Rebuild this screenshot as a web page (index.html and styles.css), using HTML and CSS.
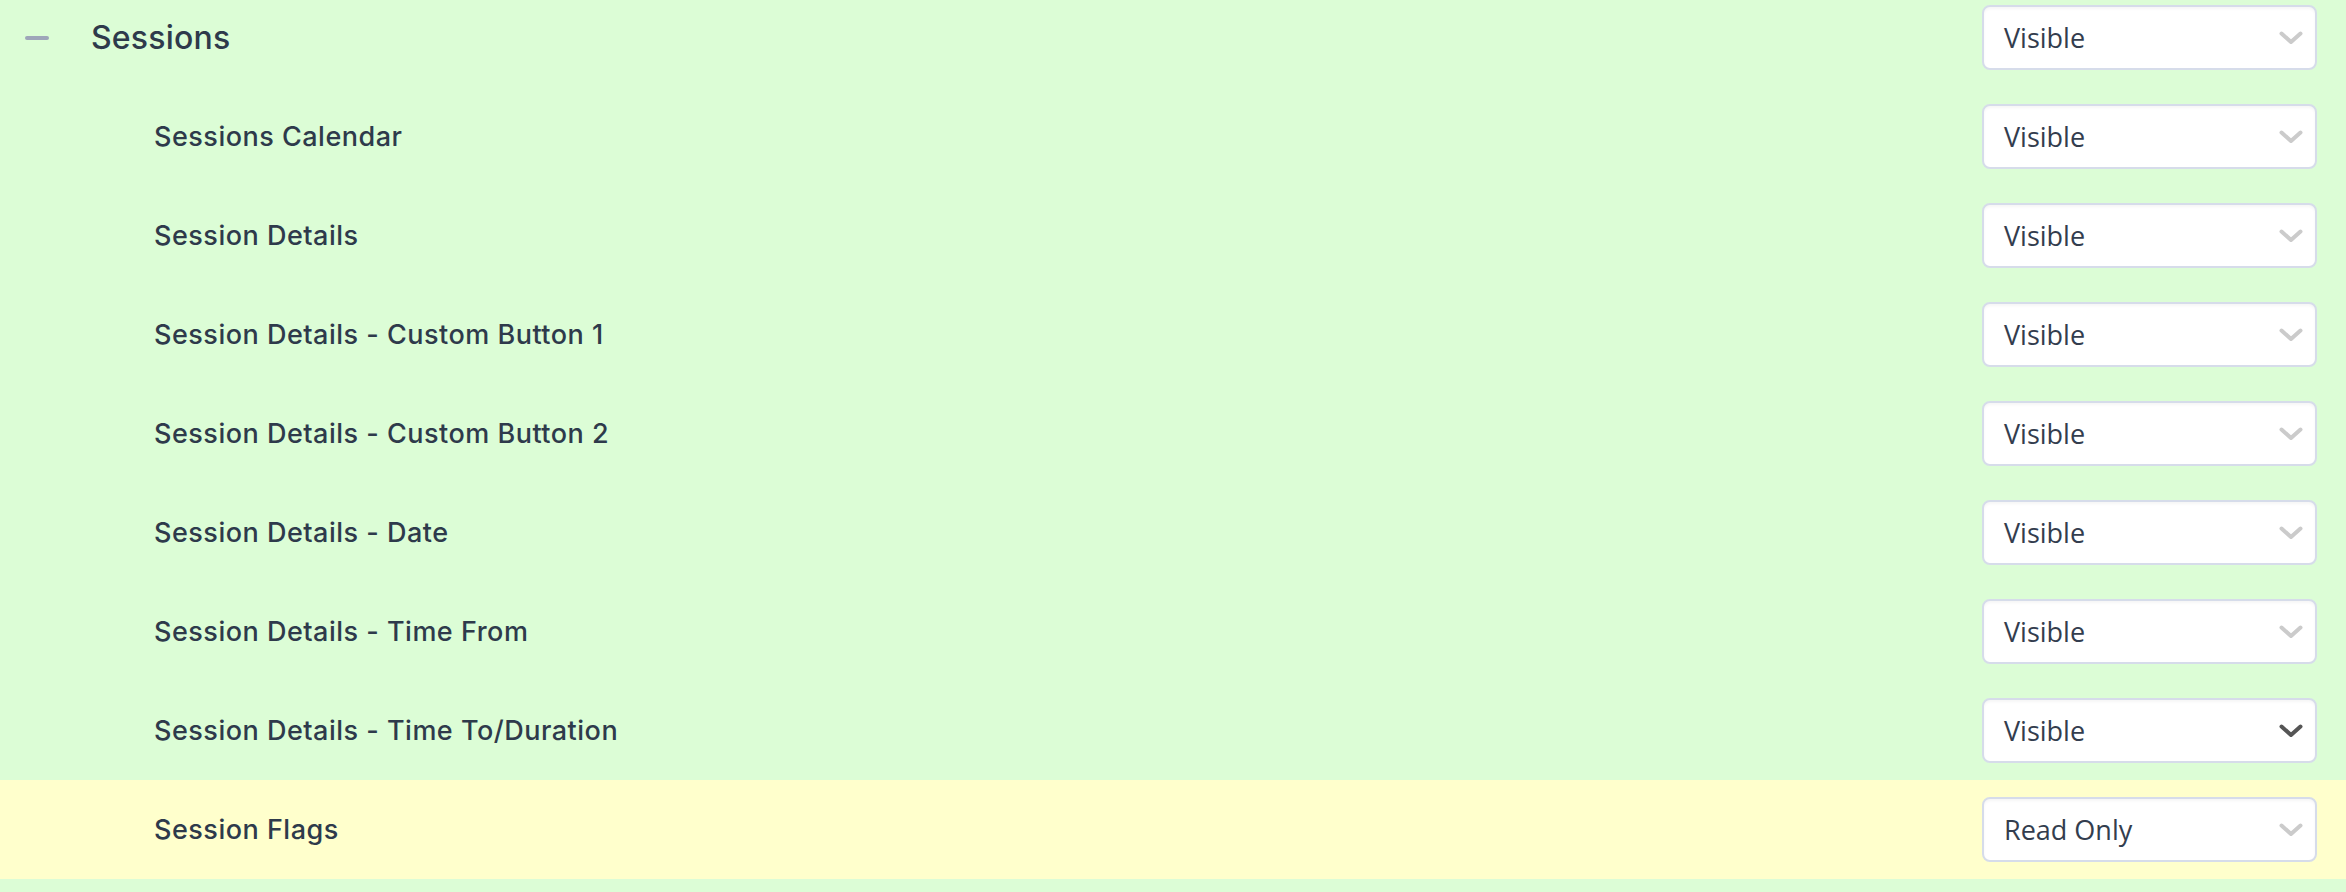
FILE: index.html
```html
<!DOCTYPE html>
<html lang="en">
<head>
<meta charset="utf-8">
<title>Sessions permissions</title>
<link rel="stylesheet" href="styles.css">
</head>
<body>
<div class="list">
  <div class="row header">
    <span class="toggle"></span>
    <span class="title">Sessions</span>
    <div class="select"><span class="value">Visible</span><svg class="chev" viewBox="0 0 24 14"><polyline points="2.5,2.5 12,11 21.5,2.5"/></svg></div>
  </div>
  <div class="row sub">
    <span class="label">Sessions Calendar</span>
    <div class="select"><span class="value">Visible</span><svg class="chev" viewBox="0 0 24 14"><polyline points="2.5,2.5 12,11 21.5,2.5"/></svg></div>
  </div>
  <div class="row sub">
    <span class="label">Session Details</span>
    <div class="select"><span class="value">Visible</span><svg class="chev" viewBox="0 0 24 14"><polyline points="2.5,2.5 12,11 21.5,2.5"/></svg></div>
  </div>
  <div class="row sub">
    <span class="label">Session Details - Custom Button 1</span>
    <div class="select"><span class="value">Visible</span><svg class="chev" viewBox="0 0 24 14"><polyline points="2.5,2.5 12,11 21.5,2.5"/></svg></div>
  </div>
  <div class="row sub">
    <span class="label">Session Details - Custom Button 2</span>
    <div class="select"><span class="value">Visible</span><svg class="chev" viewBox="0 0 24 14"><polyline points="2.5,2.5 12,11 21.5,2.5"/></svg></div>
  </div>
  <div class="row sub">
    <span class="label">Session Details - Date</span>
    <div class="select"><span class="value">Visible</span><svg class="chev" viewBox="0 0 24 14"><polyline points="2.5,2.5 12,11 21.5,2.5"/></svg></div>
  </div>
  <div class="row sub">
    <span class="label">Session Details - Time From</span>
    <div class="select"><span class="value">Visible</span><svg class="chev" viewBox="0 0 24 14"><polyline points="2.5,2.5 12,11 21.5,2.5"/></svg></div>
  </div>
  <div class="row sub">
    <span class="label">Session Details - Time To/Duration</span>
    <div class="select hover"><span class="value">Visible</span><svg class="chev" viewBox="0 0 24 14"><polyline points="2.5,2.5 12,11 21.5,2.5"/></svg></div>
  </div>
  <div class="row sub readonly">
    <span class="label">Session Flags</span>
    <div class="select"><span class="value">Read Only</span><svg class="chev" viewBox="0 0 24 14"><polyline points="2.5,2.5 12,11 21.5,2.5"/></svg></div>
  </div>
</div>
</body>
</html>
```
FILE: styles.css
```css
html, body {
  margin: 0;
  padding: 0;
  background: #dcfdd6;
  overflow: hidden;
}
body {
  width: 2346px;
  height: 892px;
  font-family: Inter, "Noto Sans", sans-serif;
  color: #2e3a4b;
}
.list {
  margin-top: -12px;
  display: flex;
  flex-direction: column;
}
.row {
  height: 99px;
  box-sizing: border-box;
  display: flex;
  align-items: center;
  padding-right: 29px;
  background: #dcfdd6;
}
.row.readonly {
  background: #ffffcc;
}
.header {
  padding-left: 25px;
}
.toggle {
  width: 24px;
  height: 4px;
  border-radius: 2px;
  background: #9ea6b9;
  margin-right: 42px;
}
.title {
  font-size: 32px;
  font-weight: 500;
  letter-spacing: 0.2px;
}
.sub {
  padding-left: 154px;
}
.label {
  font-size: 27px;
  font-weight: 500;
  letter-spacing: 0.5px;
}
.select {
  margin-left: auto;
  width: 335px;
  height: 65px;
  box-sizing: border-box;
  border: 2px solid #d6dcea;
  border-radius: 8px;
  background: #ffffff;
  box-shadow: inset 0 2px 3px rgba(0, 0, 0, 0.04);
  display: flex;
  align-items: center;
  padding-left: 20px;
  padding-right: 12px;
}
.value {
  font-family: "Open Sans", "Noto Sans", sans-serif;
  font-size: 27px;
  color: #333d4e;
}
.chev {
  margin-left: auto;
  width: 24px;
  height: 14px;
  fill: none;
  stroke: #cbcbcb;
  stroke-width: 4;
  stroke-linecap: round;
  stroke-linejoin: round;
}
.select.hover .chev {
  stroke: #555555;
}
```
